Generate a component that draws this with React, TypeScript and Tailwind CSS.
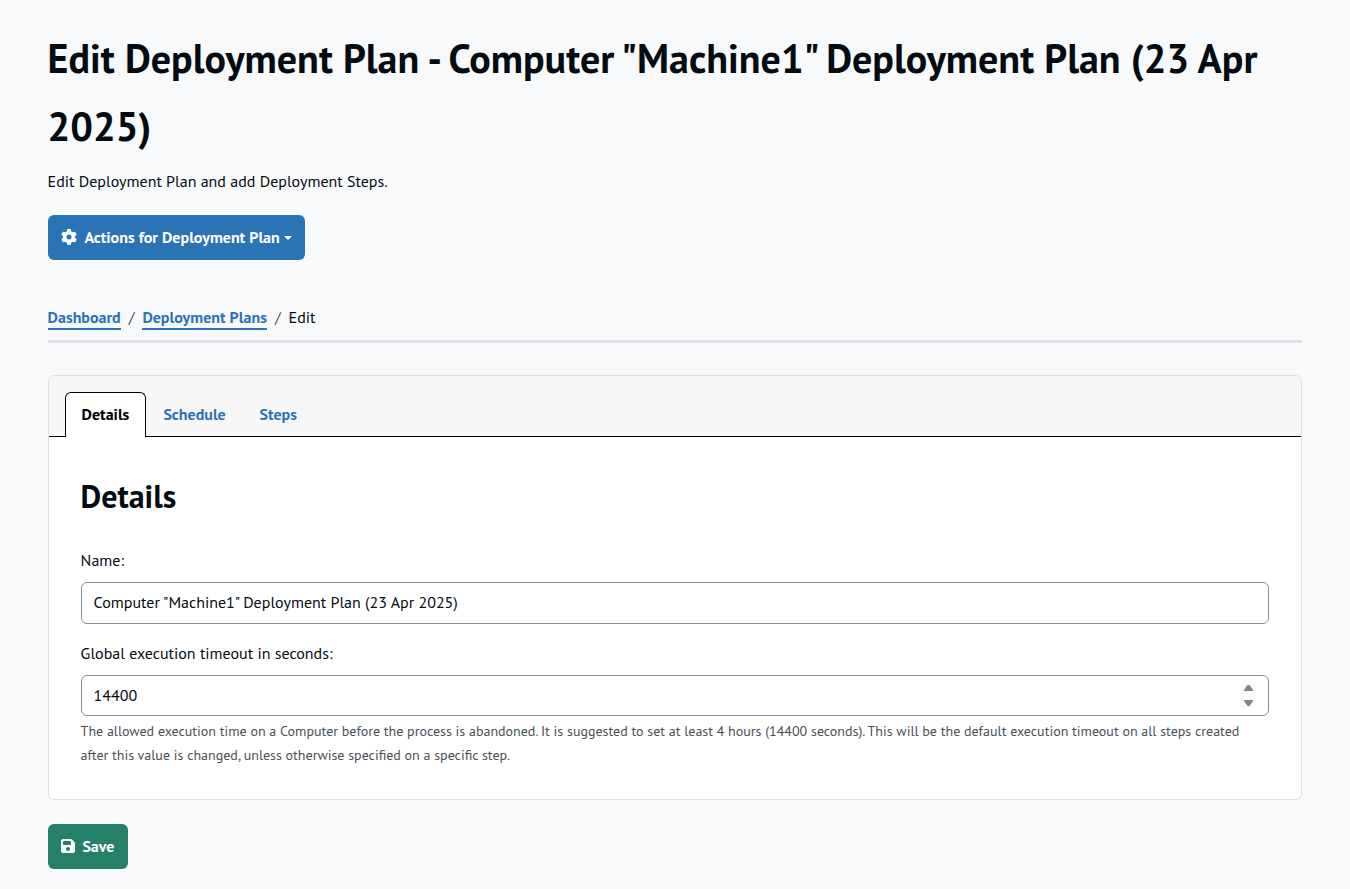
import React from "react";
import { FaFloppyDisk, FaGear } from "react-icons/fa6";

export default function App() {
  return (
    <div className="min-h-[889px] bg-[#f8f9fb] px-12 pt-6 font-['PT_Sans','Noto_Sans',sans-serif] text-[16px] leading-[27.2px] text-[#040b11]">
      <h1 className="-ml-[0.4px] text-[40px] leading-[68px] font-semibold whitespace-nowrap">
        Edit Deployment Plan - Computer "Machine1" Deployment Plan (23 Apr
        <br />
        2025)
      </h1>
      <p className="mt-2 -ml-[0.4px] h-[27px]">Edit Deployment Plan and add Deployment Steps.</p>
      <button className="mt-5 flex h-[45px] w-[257px] items-center rounded-md bg-[#2a74b5] pl-[13px] font-bold whitespace-nowrap text-white">
        <FaGear className="-mt-0.5 size-4 shrink-0" />
        <span className="ml-[7.4px] w-[196px] text-left">Actions for Deployment Plan</span>
        <span className="ml-[3.6px] border-x-[4px] border-t-[4px] border-x-transparent border-t-white" />
      </button>

      <nav className="mt-11 flex h-[39px] border-b-[3px] border-[#dddfe2] whitespace-nowrap">
        <a className="-ml-[0.4px] h-[26px] border-b-2 border-[#2a74b5] font-semibold text-[#2a74b5]">Dashboard</a>
        <span className="px-2 text-[#495057]">/</span>
        <a className="h-[26px] border-b-2 border-[#2a74b5] font-semibold text-[#2a74b5]">Deployment Plans</a>
        <span className="px-2 text-[#495057]">/</span>
        <span>Edit</span>
      </nav>

      <section className="mt-8 h-[425px] rounded-md border border-[#dee0e6] bg-white">
        <div className="flex h-[61px] items-end rounded-t-md border-b border-black bg-[#f7f7f7] pl-4 font-semibold whitespace-nowrap text-[#2a74b5]">
          <div className="-mb-px h-[45px] w-[81px] rounded-t-md border border-b-0 border-black bg-white pt-2 pl-[15.6px] text-black">Details</div>
          <div className="h-[44px] w-[96px] pt-[9px] pl-[17.4px]">Schedule</div>
          <div className="h-[44px] pt-[9px] pl-[17.5px]">Steps</div>
        </div>
        <div className="px-8 pt-8">
          <h2 className="-ml-[0.4px] text-[32px] leading-[54px] font-semibold">Details</h2>
          <label className="mt-6 -ml-[0.4px] block h-[27px]">Name:</label>
          <div className="mt-2 flex h-[42px] items-start rounded-md border border-[#868e96] pt-[6px] pl-[11.6px]">Computer "Machine1" Deployment Plan (23 Apr 2025)</div>
          <label className="mt-4 -ml-[0.4px] block h-[27px]">Global execution timeout in seconds:</label>
          <div className="mt-2 flex h-[41px] items-center justify-between rounded-md border border-[#868e96] pr-3 pl-[11.6px]">
            14400
            <svg className="-mt-px h-[26px] w-[15px]" viewBox="0 0 15 26"><path fill="#fafafa" d="M0 0h15v26H0z" /><path fill="#858585" d="M3 9V8L6.5 3h2L12 8v1zM3 18h9v1l-3.5 5h-2L3 19z" /></svg>
          </div>
          <p className="mt-[3px] -ml-[0.4px] text-[14px] leading-6 whitespace-nowrap text-[#495057]">
            The allowed execution time on a Computer before the process is abandoned. It is suggested to set at least 4 hours (14400 seconds). This will be the default execution timeout on all steps created
            <br />
            after this value is changed, unless otherwise specified on a specific step.
          </p>
        </div>
      </section>

      <button className="mt-6 flex h-[45px] w-20 items-center rounded-md bg-[#267f69] pl-3 font-bold text-white">
        <FaFloppyDisk className="-mt-px -ml-[0.5px] size-4 shrink-0" />
        <span className="ml-[6.9px]">Save</span>
      </button>
    </div>
  );
}
